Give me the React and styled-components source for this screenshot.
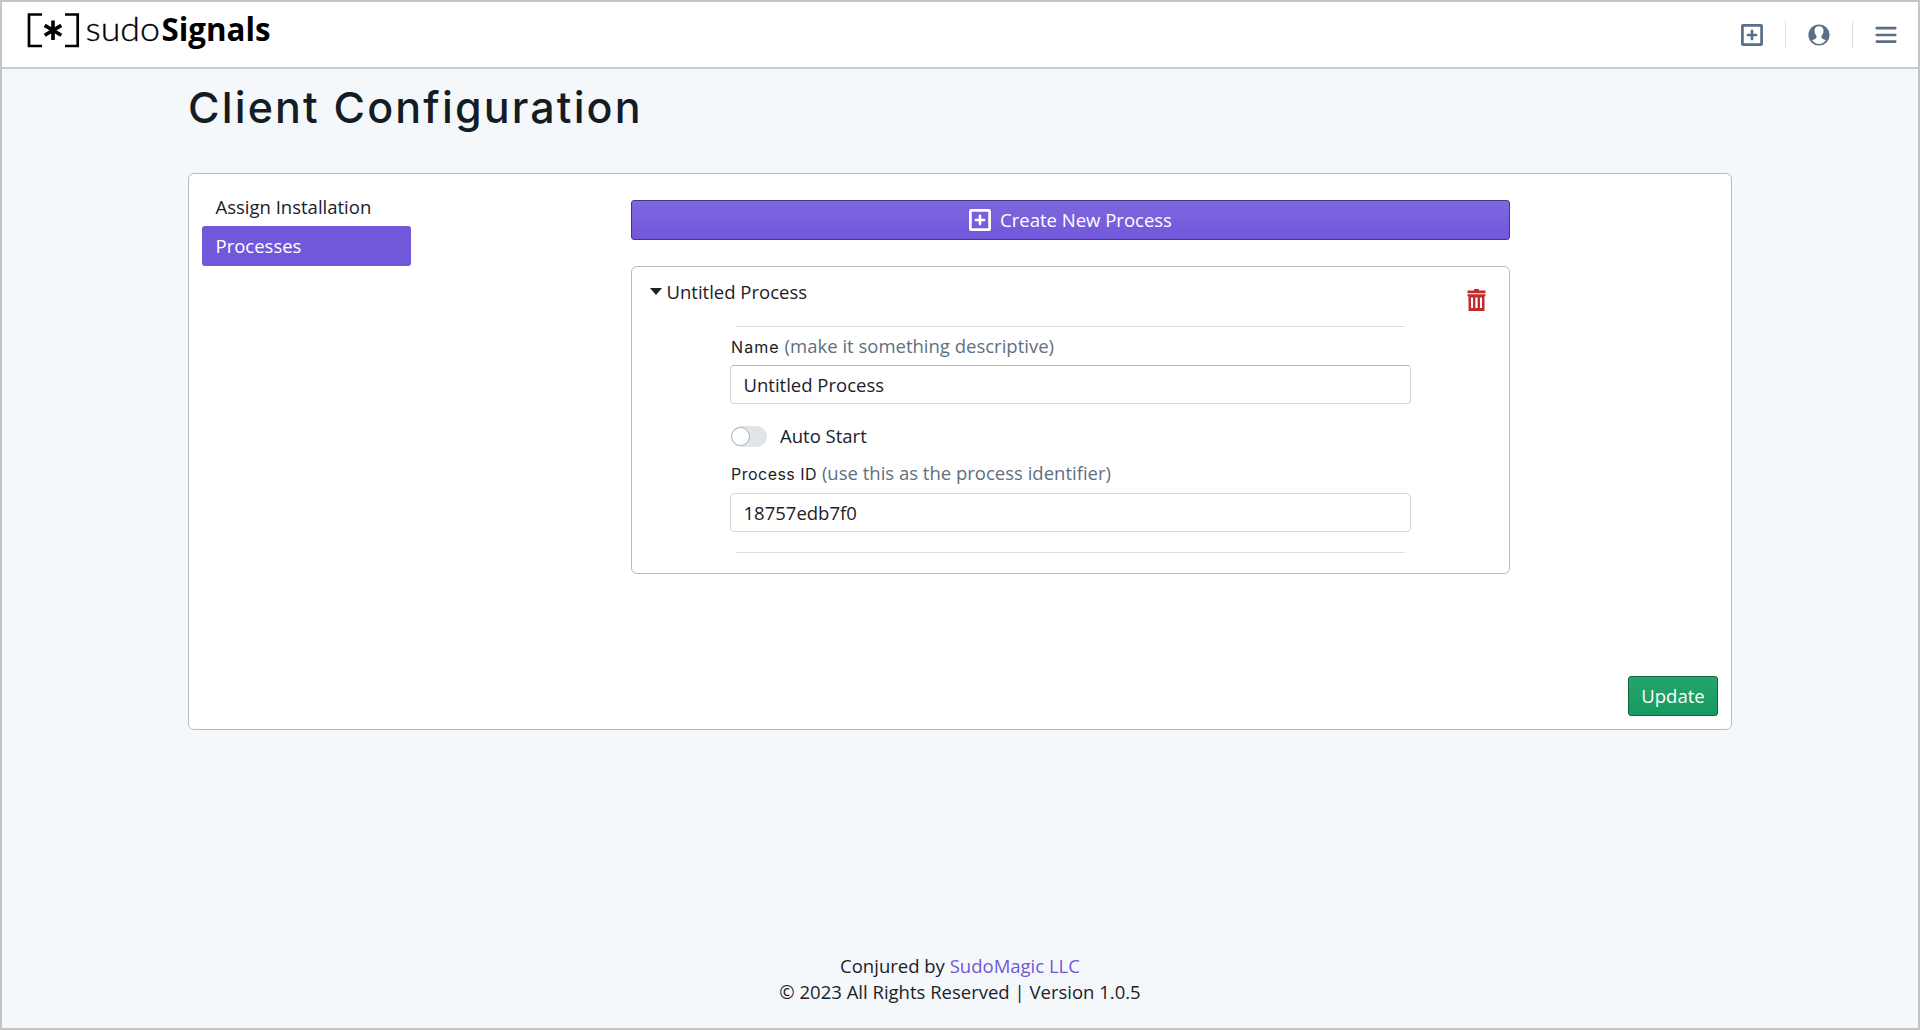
import React from "react";
import styled, { createGlobalStyle } from "styled-components";

const GlobalStyle = createGlobalStyle`
  * { box-sizing: border-box; }
  body {
    margin: 0;
    font-family: "Open Sans", "Noto Sans", sans-serif;
    font-size: 18.5px;
    line-height: 26px;
    color: #1c2127;
    background: #f4f8fb;
  }
`;

const Page = styled.div`
  display: flex;
  flex-direction: column;
  height: 1030px;
  border: 2px solid #c4c4c4;
  background: #f4f8fb;
`;

const Header = styled.header`
  display: flex;
  justify-content: space-between;
  flex: none;
  height: 67px;
  padding: 0 21.5px 0 25px;
  background: #fff;
  border-bottom: 2px solid #c7ccd1;
`;

const Logo = styled.svg`
  display: block;
  width: 256px;
  height: 64px;
  font-size: 33px;
  overflow: visible;
`;

const Tools = styled.nav`
  display: flex;
  align-items: center;
  height: 65px;
  color: #5a6e85;
  svg { display: block; }
`;

const Separator = styled.span`
  width: 1px;
  height: 27px;
  margin: 0 22px 0 22px;
  background: #dcdee1;
`;

const Main = styled.main`
  width: 1544px;
  margin: 0 auto;
  flex: none;
`;

const Title = styled.h1`
  margin: 0;
  height: 104px;
  padding: 13px 0 0 0;
  font-family: Inter, sans-serif;
  font-weight: 500;
  font-size: 43px;
  line-height: 50px;
  letter-spacing: 2.15px;
  color: #151d24;
`;

const Panel = styled.section`
  display: flex;
  height: 557px;
  padding: 13px;
  background: #fff;
  border: 1px solid #b9bcbf;
  border-radius: 6px;
`;

const Sidebar = styled.ul`
  width: 209px;
  margin: 0;
  padding: 0;
  list-style: none;
`;

const SidebarItem = styled.li`
  height: ${(p) => (p.$active ? 40 : 39)}px;
  padding: 0 13.5px;
  line-height: 39px;
  border-radius: 3px;
  color: ${(p) => (p.$active ? "#fff" : "#1c2127")};
  background: ${(p) => (p.$active ? "#7157d9" : "transparent")};
`;

const Content = styled.div`
  width: 879px;
  margin: 13px 0 0 220px;
`;

const Button = styled.button`
  display: flex;
  align-items: center;
  justify-content: center;
  gap: 9px;
  width: ${(p) => p.$width};
  height: 40px;
  padding: 0;
  font: inherit;
  color: #fff;
  border: 1px solid ${(p) => (p.$tone === "green" ? "#12613f" : "#44348c")};
  border-radius: 3px;
  background: ${(p) =>
    p.$tone === "green"
      ? "linear-gradient(#25a56c, #169a60)"
      : "linear-gradient(#7f67de, #7257da)"};
`;

const Card = styled.article`
  height: 308px;
  margin-top: 26px;
  padding: 12px 18px 0;
  border: 1px solid #b9bcbf;
  border-radius: 6px;
`;

const CardHeader = styled.div`
  display: flex;
  justify-content: space-between;
  height: 47px;
`;

const CardTitle = styled.div`
  display: flex;
  gap: 4.5px;
  height: 26px;
`;

const Caret = styled.span`
  margin-top: 9px;
  width: 12px;
  height: 7px;
  background: #1c2127;
  clip-path: polygon(0 0, 100% 0, 50% 100%);
`;

const DeleteIcon = styled.svg`
  width: 19px;
  height: 22px;
  margin: 10px 5px 0 0;
`;

const Form = styled.div`
  width: 681px;
  margin-left: 80px;
`;

const Divider = styled.hr`
  height: 1px;
  margin: ${(p) => p.$top || 0}px 6px 0;
  border: 0;
  background: #dde0e3;
`;

const Label = styled.label`
  display: block;
  height: 26px;
  margin-top: ${(p) => p.$top}px;
  padding-left: 1px;
  color: #5f6f80;
  white-space: nowrap;
`;

const LabelName = styled.span`
  font-family: Inter, sans-serif;
  font-size: 16px;
  letter-spacing: ${(p) => p.$spacing}px;
  color: #1c2127;
`;

const Input = styled.input`
  display: block;
  width: 100%;
  height: 39px;
  margin-top: ${(p) => p.$top}px;
  padding: 0 12.5px;
  font: inherit;
  color: #1c2127;
  background: #fff;
  border: 1px solid #d5d8dc;
  border-top-color: ${(p) => (p.$shaded ? "#b3b9bb" : "#d5d8dc")};
  border-radius: 4px;
  outline: 0;
`;

const SwitchRow = styled.div`
  display: flex;
  align-items: center;
  gap: 13px;
  height: 26px;
  margin-top: 19px;
  padding-left: 1px;
`;

const Track = styled.span`
  display: flex;
  align-items: center;
  width: 36px;
  height: 21px;
  border-radius: 11px;
  background: #dfe5e9;
`;

const Knob = styled.span`
  width: 19px;
  height: 19px;
  border: 1px solid #a9b2bd;
  border-radius: 50%;
  background: #fff;
`;

const Actions = styled.div`
  display: flex;
  flex: 1;
  justify-content: flex-end;
  align-items: flex-end;
`;

const Footer = styled.footer`
  margin-top: auto;
  padding-bottom: 23px;
  text-align: center;
`;

const Link = styled.a`
  color: #7157d9;
`;

function PlusBox() {
  return (
    <svg width="22" height="22" viewBox="0 0 22 22" fill="none" stroke="currentColor">
      <rect x="1.4" y="1.4" width="19.2" height="19.2" rx=".7" strokeWidth="2.7" />
      <path d="M11 6.9v8.2M6.9 11h8.2" strokeWidth="2.6" strokeLinecap="round" />
    </svg>
  );
}

function UserIcon() {
  return (
    <svg width="22" height="22" viewBox="0 0 22 22">
      <circle cx="11" cy="11" r="10.6" fill="currentColor" />
      <path
        fill="#fff"
        d="M11 2.2c3 0 4.7 2 4.5 4.8-.1 2-.9 3.7-1.9 4.8-.4 1.8 0 2.7 1.5 3.3l2.8 1.2A9 9 0 0 1 11 20a9 9 0 0 1-6.9-3.7l2.8-1.2c1.5-.6 1.9-1.5 1.5-3.3-1-1.1-1.8-2.8-1.9-4.8C6.3 4.2 8 2.2 11 2.2z"
      />
    </svg>
  );
}

function MenuIcon() {
  return (
    <svg width="22" height="22" viewBox="0 0 22 22" stroke="currentColor">
      <path d="M1.8 4.2h18.4M1.8 11h18.4M1.8 17.6h18.4" strokeWidth="2.7" strokeLinecap="round" />
    </svg>
  );
}

export default function App() {
  return (
    <>
      <GlobalStyle />
      <Page>
        <Header>
          <Logo viewBox="27 2 256 64">
            <path
              d="M42 14.5H29V46H42M65 14.5H77.7V46H65"
              fill="none"
              stroke="#000"
              strokeWidth="2.7"
            />
            <path
              d="M53 20.5V40M44.7 25.4L61.3 35.2M61.3 25.4L44.7 35.2"
              stroke="#000"
              strokeWidth="3.6"
            />
            <text x="85.5" y="41" fontFamily="Lato, sans-serif" fontWeight="300" stroke="#000" strokeWidth=".3" textLength="74.5" lengthAdjust="spacingAndGlyphs">
              sudo
            </text>
            <text x="161.5" y="41" fontFamily="Open Sans, sans-serif" fontWeight="700" textLength="109" lengthAdjust="spacingAndGlyphs">
              Signals
            </text>
          </Logo>
          <Tools>
            <PlusBox />
            <Separator />
            <UserIcon />
            <Separator />
            <MenuIcon />
          </Tools>
        </Header>
        <Main>
          <Title>Client Configuration</Title>
          <Panel>
            <Sidebar>
              <SidebarItem>Assign Installation</SidebarItem>
              <SidebarItem $active>Processes</SidebarItem>
            </Sidebar>
            <Content>
              <Button $width="100%">
                <PlusBox />
                Create New Process
              </Button>
              <Card>
                <CardHeader>
                  <CardTitle>
                    <Caret />
                    Untitled Process
                  </CardTitle>
                  <DeleteIcon viewBox="0 0 19 22" fill="#c12d2d">
                    <path d="M7 0h5v1.500h6.500v2.700H.5V1.500H7z" />
                    <path fillRule="evenodd" d="M.5 5.200h18v2h-1V22h-16V7.200h-1zM4 8.500v10.500h2V8.500zM8.400 8.500v10.500h2.200V8.500zM13 8.500v10.500h2V8.500z" />
                  </DeleteIcon>
                </CardHeader>
                <Form>
                  <Divider />
                  <Label $top={6}>
                    <LabelName $spacing={1.1}>Name</LabelName> (make it something descriptive)
                  </Label>
                  <Input $top={6} $shaded defaultValue="Untitled Process" />
                  <SwitchRow>
                    <Track>
                      <Knob />
                    </Track>
                    Auto Start
                  </SwitchRow>
                  <Label $top={11}>
                    <LabelName $spacing={0.48}>Process ID</LabelName> (use this as the process identifier)
                  </Label>
                  <Input $top={7} defaultValue="18757edb7f0" />
                  <Divider $top={20} />
                </Form>
              </Card>
            </Content>
            <Actions>
              <Button $width="90px" $tone="green">Update</Button>
            </Actions>
          </Panel>
        </Main>
        <Footer>
          <div>
            Conjured by <Link>SudoMagic LLC</Link>
          </div>
          <div>© 2023 All Rights Reserved | Version 1.0.5</div>
        </Footer>
      </Page>
    </>
  );
}
